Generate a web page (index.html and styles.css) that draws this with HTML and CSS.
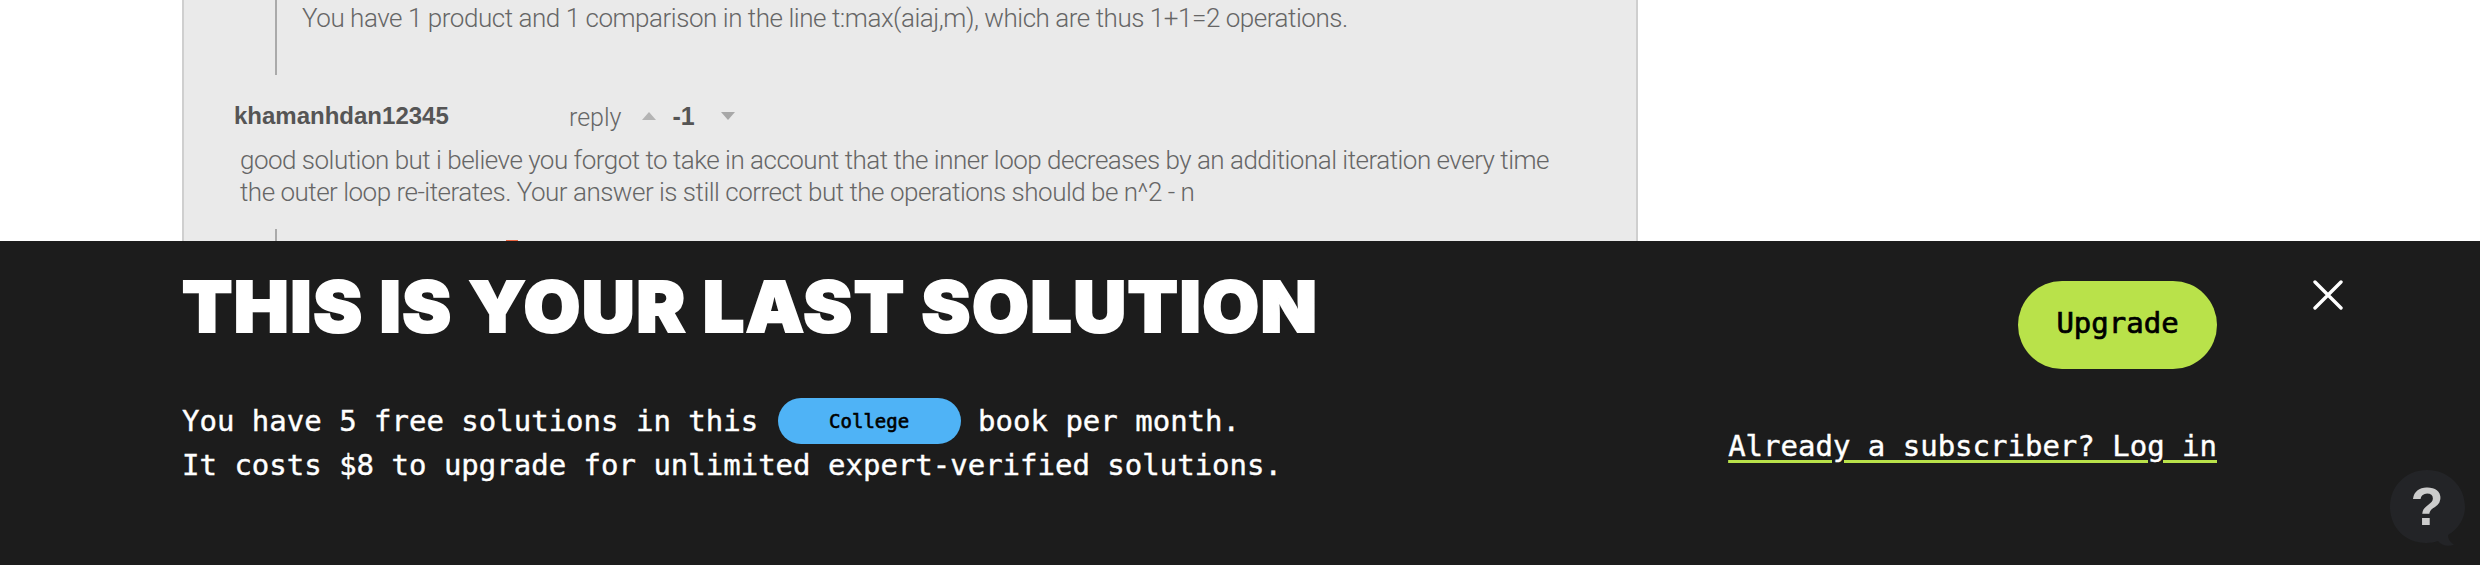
FILE: index.html
```html
<!DOCTYPE html>
<html lang="en">
<head>
  <meta charset="UTF-8">
  <title>Solution</title>
  <link rel="stylesheet" href="styles.css">
</head>

<body>
<div class="comments">
  <div class="thread thread-first">
    <p class="comment-text">You have 1 product and 1 comparison in the line t:max(aiaj,m), which are thus 1+1=2 operations.</p>
  </div>
  <div class="comment">
    <div class="comment-head">
      <span class="username">khamanhdan12345</span>
      <span class="reply">reply</span>
      <span class="arrow-up"></span>
      <span class="score">-1</span>
      <span class="arrow-down"></span>
    </div>
    <p class="comment-body">good solution but i believe you forgot to take in account that the inner loop decreases by an additional iteration every time the outer loop re-iterates. Your answer is still correct but the operations should be n^2 - n</p>
  </div>
  <div class="thread thread-next"><span class="speck"></span></div>
</div>

<div class="banner">
  <div class="banner-left">
    <h1 class="banner-title">THIS IS YOUR LAST SOLUTION</h1>
    <p class="banner-text">You have 5 free solutions in this <span class="pill">College</span> book per month.<br>It costs $8 to upgrade for unlimited expert-verified solutions.</p>
  </div>
  <div class="banner-right">
    <a class="upgrade">Upgrade</a>
    <a class="login">Already a subscriber? Log in</a>
  </div>
  <svg class="close" viewBox="0 0 30 30" width="30" height="30">
    <path d="M2 2L28 28M28 2L2 28" stroke="#fff" stroke-width="3.4" stroke-linecap="round"/>
  </svg>
  <div class="help">
    <svg viewBox="0 0 76 78" width="76" height="78">
      <path d="M38 1C17 1 1 17 1 38s16 36 36 36c5 0 9-1 12-2 3 4 9 6 15 4 1 0 1-1 0-1-3-2-5-5-5-9 10-6 17-16 17-28C76 17 59 1 38 1z" fill="#232427"/>
    </svg>
    <span class="help-mark">?</span>
  </div>
</div>
</body>
</html>
```

FILE: styles.css
```css
html, body {
  margin: 0;
  height: 565px;
  overflow: hidden;
  background: #fff;
}

p, h1 {
  margin: 0;
}

.comments {
  width: 1456px;
  height: 241px;
  margin-left: 182px;
  overflow: hidden;
  box-sizing: border-box;
  background: #eaeaea;
  border-left: 2px solid #cfcfcf;
  border-right: 2px solid #cfcfcf;
  font-family: Roboto, "Liberation Sans", sans-serif;
  font-weight: 300;
  font-size: 26px;
  line-height: 32px;
  color: #666;
}

.thread {
  margin-left: 91px;
  border-left: 2px solid #aaa;
}

.thread-first {
  height: 75px;
  padding: 2px 0 0 25px;
  box-sizing: border-box;
}

.thread-next {
  position: relative;
  height: 12px;
  margin-top: 21px;
}

.speck {
  position: absolute;
  left: 229px;
  top: 11px;
  width: 12px;
  height: 1px;
  background: #e8633f;
}

.comment-text {
  letter-spacing: -0.46px;
}

.comment {
  padding: 25px 56px 0 56px;
}

.comment-head {
  display: flex;
  align-items: center;
  height: 32px;
  margin-left: -6px;
}

.username {
  width: 335px;
  font-family: "Liberation Sans", sans-serif;
  font-weight: 700;
  font-size: 24px;
  color: #555;
}

.reply {
  margin-top: 3px;
  font-size: 25px;
}

.arrow-up {
  width: 0;
  margin-left: 20px;
  border-bottom: 8px solid #b4b4b4;
  border-left: 7px solid transparent;
  border-right: 7px solid transparent;
}

.score {
  margin-left: 17px;
  font-family: "Liberation Sans", sans-serif;
  font-weight: 700;
  font-size: 25px;
  color: #555;
}

.arrow-down {
  width: 0;
  margin-left: 26px;
  border-top: 8px solid #a8a8a8;
  border-left: 7px solid transparent;
  border-right: 7px solid transparent;
}

.comment-body {
  width: 1330px;
  margin-top: 12px;
  letter-spacing: -0.5px;
}

/* bar lying over the page */
.banner {
  position: absolute;
  left: 0;
  right: 0;
  top: 241px;
  height: 324px;
  padding: 0 263px 0 182px;
  box-sizing: border-box;
  display: flex;
  justify-content: space-between;
  background: #1c1c1c;
  color: #fff;
  font-family: "DejaVu Sans Mono", monospace;
  font-size: 29px;
  -webkit-text-stroke: 0.4px currentColor;
}

.banner-title {
  margin-top: 26px;
  font-family: Inter, "Liberation Sans", sans-serif;
  font-weight: 900;
  font-size: 70px;
  line-height: 80px;
  letter-spacing: 1.4px;
  white-space: nowrap;
  -webkit-text-stroke: 2px #fff;
  transform: scaleX(1.048);
  transform-origin: left center;
}

.banner-text {
  margin-top: 52px;
  line-height: 44px;
  white-space: nowrap;
}

.pill {
  display: inline-block;
  width: 183px;
  height: 46px;
  margin: -1px 0 -1px 2px;
  border-radius: 23px;
  background: #4fb3f6;
  color: #000;
  font-size: 19px;
  line-height: 46px;
  text-align: center;
  vertical-align: top;
  -webkit-text-stroke: 0.6px #000;
}

.banner-right {
  display: flex;
  flex-direction: column;
  align-items: flex-end;
  padding-top: 40px;
}

.upgrade {
  width: 199px;
  height: 88px;
  border-radius: 44px;
  background: #b9e24a;
  color: #000;
  line-height: 84px;
  text-align: center;
  -webkit-text-stroke: 0.7px #000;
}

.login {
  margin-top: 55px;
  line-height: 44px;
  white-space: nowrap;
  text-decoration: underline;
  text-decoration-color: #b9e24a;
  text-decoration-thickness: 3px;
  text-underline-offset: 4px;
}

.close {
  position: absolute;
  left: 2313px;
  top: 39px;
}

.help {
  position: absolute;
  left: 2389px;
  top: 228px;
  width: 76px;
  height: 78px;
}

.help-mark {
  position: absolute;
  left: 0;
  width: 76px;
  top: 6px;
  text-align: center;
  font-family: "Liberation Sans", sans-serif;
  font-weight: 700;
  font-size: 54px;
  line-height: 62px;
  color: #ccc;
  -webkit-text-stroke: 0;
}
```
